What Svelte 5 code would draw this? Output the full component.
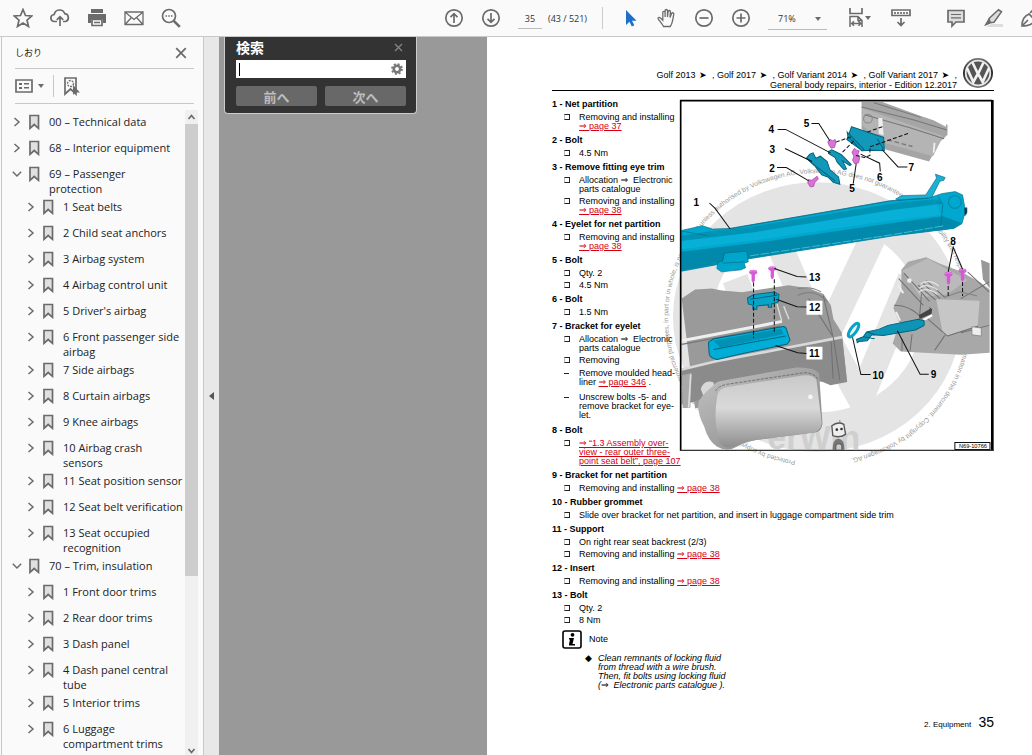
<script>
    /**
     * @typedef {Object} Bookmark
     * @property {string[]} lines - Title, one entry per line
     * @property {number} level - Depth in the outline
     * @property {boolean} [open] - Whether the children are shown
     */

    /** @type {Bookmark[]} */
    const bookmarks = [
        { lines: ["00 – Technical data"], level: 0 },
        { lines: ["68 – Interior equipment"], level: 0 },
        { lines: ["69 – Passenger", "protection"], level: 0, open: true },
        { lines: ["1 Seat belts"], level: 1 },
        { lines: ["2 Child seat anchors"], level: 1 },
        { lines: ["3 Airbag system"], level: 1 },
        { lines: ["4 Airbag control unit"], level: 1 },
        { lines: ["5 Driver's airbag"], level: 1 },
        { lines: ["6 Front passenger side", "airbag"], level: 1 },
        { lines: ["7 Side airbags"], level: 1 },
        { lines: ["8 Curtain airbags"], level: 1 },
        { lines: ["9 Knee airbags"], level: 1 },
        { lines: ["10 Airbag crash", "sensors"], level: 1 },
        { lines: ["11 Seat position sensor"], level: 1 },
        { lines: ["12 Seat belt verification"], level: 1 },
        { lines: ["13 Seat occupied", "recognition"], level: 1 },
        { lines: ["70 – Trim, insulation"], level: 0, open: true },
        { lines: ["1 Front door trims"], level: 1 },
        { lines: ["2 Rear door trims"], level: 1 },
        { lines: ["3 Dash panel"], level: 1 },
        { lines: ["4 Dash panel central", "tube"], level: 1 },
        { lines: ["5 Interior trims"], level: 1 },
        { lines: ["6 Luggage", "compartment trims"], level: 1 },
    ];

    // Each entry is a list of lines; a line is [plain text, link text, trailing text]
    const besideFigure = [
        { no: 1, name: "Net partition", items: [{ lines: [["Removing and installing"], ["", "⇒ page 37"]] }] },
        { no: 2, name: "Bolt", items: [{ lines: [["4.5 Nm"]] }] },
        {
            no: 3,
            name: "Remove fitting eye trim",
            items: [
                { lines: [["Allocation ⇒  Electronic"], ["parts catalogue"]] },
                { lines: [["Removing and installing"], ["", "⇒ page 38"]] },
            ],
        },
        { no: 4, name: "Eyelet for net partition", items: [{ lines: [["Removing and installing"], ["", "⇒ page 38"]] }] },
        { no: 5, name: "Bolt", items: [{ lines: [["Qty. 2"]] }, { lines: [["4.5 Nm"]] }] },
        { no: 6, name: "Bolt", items: [{ lines: [["1.5 Nm"]] }] },
        {
            no: 7,
            name: "Bracket for eyelet",
            items: [
                { lines: [["Allocation ⇒  Electronic"], ["parts catalogue"]] },
                { lines: [["Removing"]] },
                { step: true, lines: [["Remove moulded head-"], ["liner ", "⇒ page 346", " ."]] },
                { step: true, lines: [["Unscrew bolts -5- and"], ["remove bracket for eye-"], ["let."]] },
            ],
        },
        {
            no: 8,
            name: "Bolt",
            items: [
                {
                    lines: [
                        ["", "⇒ “1.3 Assembly over-"],
                        ["", "view - rear outer three-"],
                        ["", "point seat belt”, page 107"],
                    ],
                },
            ],
        },
    ];

    const belowFigure = [
        { no: 9, name: "Bracket for net partition", items: [{ lines: [["Removing and installing ", "⇒ page 38"]] }] },
        {
            no: 10,
            name: "Rubber grommet",
            items: [{ lines: [["Slide over bracket for net partition, and insert in luggage compartment side trim"]] }],
        },
        {
            no: 11,
            name: "Support",
            items: [
                { lines: [["On right rear seat backrest (2/3)"]] },
                { lines: [["Removing and installing ", "⇒ page 38"]] },
            ],
        },
        { no: 12, name: "Insert", items: [{ lines: [["Removing and installing ", "⇒ page 38"]] }] },
        { no: 13, name: "Bolt", items: [{ lines: [["Qty. 2"]] }, { lines: [["8 Nm"]] }] },
    ];

    // Callouts of the exploded view: label position and leader line
    const callouts = [
        { n: "1", x: 40, y: 324, line: "88,314 105,330 150,392" },
        { n: "2", x: 267, y: 221, line: "290,208 318,208 385,248" },
        { n: "3", x: 268, y: 164, line: "314,151 395,190" },
        { n: "4", x: 265, y: 106, line: "292,94 316,94 450,164" },
        { n: "5", x: 370, y: 87, line: "393,76 415,76 448,128" },
        { n: "5", x: 506, y: 282, line: "518,256 527,196" },
        { n: "6", x: 589, y: 247, line: "599,220 597,195 540,168" },
        { n: "7", x: 683, y: 219, line: "680,206 652,206 604,154" },
        { n: "8", x: 808, y: 440, line: "845,512 817,446 802,520" },
        { n: "13", x: 386, y: 547, line: "378,535 350,534 282,510" },
        { n: "12", x: 386, y: 637, line: "378,625 350,624 288,602" },
        { n: "11", x: 386, y: 775, line: "378,764 352,762 286,740" },
        { n: "10", x: 576, y: 840, line: "570,827 541,827 516,716" },
        { n: "9", x: 750, y: 838, line: "744,826 718,826 650,696" },
    ];

    let pageNumber = $state("35");
    let zoom = $state("71%");
    let query = $state("");
    let searchOpen = $state(true);
</script>

{#snippet partList(parts)}
    {#each parts as part}
        <section class="part">
            <h2>{part.no} - {part.name}</h2>
            <ul>
                {#each part.items as item}
                    <li class:step={item.step}>
                        <span class={item.step ? "dash" : "box"}></span>
                        <div>
                            {#each item.lines as [text, link, tail]}
                                <div class="line">{text}{#if link}<a href="#page">{link}</a>{/if}{tail ?? ""}</div>
                            {/each}
                        </div>
                    </li>
                {/each}
            </ul>
        </section>
    {/each}
{/snippet}

{#snippet bolt(x, y)}
    <g transform="translate({x} {y})" fill="#d65ad6">
        <ellipse cx="0" cy="0" rx="12" ry="7" />
        <path d="M-5 3h10v22l-4 6h-3l-3-6z" />
        <path d="M-9 -2q9 -6 18 0" fill="none" stroke="#f4a6f4" stroke-width="2" />
    </g>
{/snippet}

<div class="app">
    <header class="toolbar">
        <div class="group files">
            <button aria-label="Star">
                <svg width="20" height="20" viewBox="0 0 20 20"><path d="M10 1.500l2.500 6 6.300.5-4.800 4.200 1.500 6.300-5.500-3.400-5.500 3.400L6 12.200 1.200 8l6.300-.5z" /></svg>
            </button>
            <button aria-label="Upload">
                <svg width="20" height="20" viewBox="0 0 20 20"><path d="M7 13.500H4.500a3.500 3.500 0 0 1-.3-7 5.500 5.500 0 0 1 10.600-.8 4 4 0 0 1 .7 7.800H13M10 18V9M6.800 11.800L10 8.600l3.200 3.200" /></svg>
            </button>
            <button aria-label="Print">
                <svg width="20" height="20" viewBox="0 0 20 20"><path class="solid" d="M4 1h12v4H4zM1 6h18v9h-3v-4H4v4H1z" /><path d="M5 11.500h10v6H5zM7 14.500h6" /></svg>
            </button>
            <button aria-label="Mail">
                <svg width="20" height="20" viewBox="0 0 20 20"><path d="M1 4h18v12.500H1zM1.500 4.500l8.500 7 8.500-7M1.500 16l6-6.500M18.500 16l-6-6.500" stroke-width="1.300" /></svg>
            </button>
            <button aria-label="Search tools">
                <svg width="20" height="20" viewBox="0 0 20 20"><circle cx="8" cy="8" r="6.500" /><path d="M12.800 12.800l6 6" stroke-width="2.600" /><path d="M4.500 8h1.500M7.300 8h1.500M10 8h1.500" /></svg>
            </button>
        </div>
        <div class="group nav">
            <button aria-label="Previous page">
                <svg width="20" height="20" viewBox="0 0 20 20"><circle cx="10" cy="10" r="8.200" /><path d="M10 15V6M6.500 9.200L10 5.700l3.500 3.500" /></svg>
            </button>
            <button aria-label="Next page">
                <svg width="20" height="20" viewBox="0 0 20 20"><circle cx="10" cy="10" r="8.200" /><path d="M10 5v9M6.500 10.800l3.500 3.500 3.500-3.500" /></svg>
            </button>
        </div>
        <input class="page-no" aria-label="Page" bind:value={pageNumber} />
        <span class="page-total">(43 / 521)</span>
        <span class="divider"></span>
        <div class="group modes">
            <button aria-label="Select">
                <svg width="20" height="20" viewBox="0 0 20 20"><path d="M6 2v15l3.500-3.300 2.300 4.800 2.500-1.200-2.300-4.600h4.500z" fill="#1f6fc9" stroke="none" /></svg>
            </button>
            <button aria-label="Pan">
                <svg width="20" height="20" viewBox="0 0 20 20"><path d="M6.500 18.500C5 15.500 2.500 13 1.200 10.800c-.6-1.200 1-2 2-1l2.600 2.400V4.500c0-1.600 2.300-1.600 2.300 0V9 2.700c0-1.600 2.400-1.600 2.400 0V9l.6-5.500c.2-1.500 2.400-1.300 2.300.3L13 9.500l1.600-4c.6-1.400 2.600-.7 2.200.8-1 4-.8 8.500-3.600 12.200z" stroke-width="1.300" /></svg>
            </button>
            <button aria-label="Zoom out">
                <svg width="20" height="20" viewBox="0 0 20 20"><circle cx="10" cy="10" r="8.200" /><path d="M5.500 10h9" /></svg>
            </button>
            <button aria-label="Zoom in">
                <svg width="20" height="20" viewBox="0 0 20 20"><circle cx="10" cy="10" r="8.200" /><path d="M5.500 10h9M10 5.500v9" /></svg>
            </button>
        </div>
        <div class="zoom">
            <select aria-label="Zoom level" bind:value={zoom}>
                <option>71%</option>
                <option>100%</option>
            </select>
            <i class="caret"></i>
        </div>
        <button class="fit" aria-label="Page display">
            <svg width="18" height="20" viewBox="0 0 18 20"><path d="M3 0v5.500h12V0" /><path d="M3 19V8.500h8l4 4V19M11 8.500v4h4M5 15.500h8M7 13.200l-2.300 2.300L7 17.800M11.500 13.200l2.300 2.300-2.300 2.300" stroke-width="1.500" /></svg>
            <i class="caret"></i>
        </button>
        <button class="ruler" aria-label="Scroll mode">
            <svg width="20" height="20" viewBox="0 0 20 20"><path d="M1 2h18v5.500H1zM4 4v2M7 4v2M10 4v2M13 4v2M16 4v2M10 10v7M6.500 14l3.500 3.500 3.500-3.500" /></svg>
        </button>
        <div class="group notes">
            <button aria-label="Comment">
                <svg width="20" height="20" viewBox="0 0 20 20"><path d="M2 2.500h16v11.500h-8l-4 4v-4H2z" fill="#ddd" /><path d="M5 6.500h10M5 9.800h10" stroke-width="1.200" /></svg>
            </button>
            <button aria-label="Highlight">
                <svg width="20" height="20" viewBox="0 0 20 20"><path d="M8 16h12v3H3z" fill="#ddd" stroke="none" /><path d="M6 10.500L15.500 1.800l3 2-7.500 10.400-3.800.4zM6 11l-3 5.500 4.500-1.800" fill="#ddd" stroke-width="1.500" /><path class="solid" d="M5 12.500l2.500 2.200L1 18z" /></svg>
            </button>
            <button aria-label="Sign">
                <svg width="20" height="20" viewBox="0 0 20 20"><path d="M2 18C2 13 4 8 9 6l6 6c-2 4-7 6-13 6zM2 18l6-6M10 5l3-3 6 6" /></svg>
            </button>
        </div>
    </header>

    <div class="body">
        <aside class="sidebar">
            <div class="side-head">
                <h1>しおり</h1>
                <button aria-label="Close bookmarks">
                    <svg width="12" height="12" viewBox="0 0 12 12"><path d="M1.200 1.200l9.600 9.600M10.800 1.200L1.200 10.800" /></svg>
                </button>
            </div>
            <div class="side-tools">
                <button class="options" aria-label="Options">
                    <svg width="18" height="14" viewBox="0 0 18 14"><path d="M1 1h16v12H1z" /><path class="solid" d="M4 4h3v2H4zM4 8h3v2H4zM9 4h5v1.500H9zM9 8h5v1.500H9z" /></svg>
                    <i class="caret"></i>
                </button>
                <button aria-label="Find current bookmark">
                    <svg width="18" height="19" viewBox="0 0 18 19"><path d="M2 1h11v16l-5.500-5L2 17z" /><circle cx="7.500" cy="6.500" r="3" stroke-width="1.300" stroke-dasharray="2 1" /><path class="solid" d="M10 8v10l2.300-2.500H17z" /></svg>
                </button>
            </div>
            <div class="outline">
                <ul class="bookmarks">
                    {#each bookmarks as bookmark}
                        <li class:child={bookmark.level > 0}>
                            <button class="toggle" aria-label="Toggle {bookmark.lines[0]}">
                                {#if bookmark.open}
                                    <svg width="10" height="8" viewBox="0 0 10 8"><path d="M.8 1.800L5 6l4.200-4.200" stroke-width="1.500" /></svg>
                                {:else}
                                    <svg width="10" height="10" viewBox="0 0 10 10"><path d="M2.500 1L7 5 2.500 9" stroke-width="1.500" /></svg>
                                {/if}
                            </button>
                            <svg class="mark" width="12" height="16" viewBox="0 0 12 16"><path d="M2 1.500h8.500v12.800L6.200 10.500 2 14.300z" fill="#e0e0e0" /></svg>
                            <a href="#page">{#each bookmark.lines as line}<span>{line}</span>{/each}</a>
                        </li>
                    {/each}
                </ul>
                <div class="scrollbar">
                    <svg width="13" height="14" viewBox="0 0 13 14"><path d="M3.500 9l3-3.500 3 3.500" /></svg>
                    <div class="thumb"></div>
                    <svg width="13" height="14" viewBox="0 0 13 14"><path d="M3.500 8l3 3.500 3-3.500" /></svg>
                </div>
            </div>
        </aside>
        <button class="splitter" aria-label="Collapse panel"></button>

        <main class="viewer">
            {#if searchOpen}
                <form class="search">
                    <div class="search-head">
                        <label for="query">検索</label>
                        <button type="button" aria-label="Close search" onclick={() => (searchOpen = false)}>
                            <svg width="9" height="9" viewBox="0 0 9 9"><path d="M1 1l7 7M8 1L1 8" stroke="#858585" stroke-width="1.300" /></svg>
                        </button>
                    </div>
                    <div class="field">
                        <span class="cursor"></span>
                        <input id="query" bind:value={query} />
                        <svg width="12" height="12" viewBox="0 0 12 12"><circle cx="6" cy="6" r="3.200" stroke="#777" stroke-width="2.600" /><circle cx="6" cy="6" r="5" stroke="#777" stroke-width="1.800" stroke-dasharray="2 1.930" /></svg>
                    </div>
                    <div class="search-buttons">
                        <button type="button">前へ</button>
                        <button type="button">次へ</button>
                    </div>
                </form>
            {/if}

            <article class="page" id="page">
                <header class="page-head">
                    <div class="titles">
                        <div>Golf 2013 <i>➤</i> , Golf 2017 <i>➤</i> , Golf Variant 2014 <i>➤</i> , Golf Variant 2017 <i>➤</i> ,</div>
                        <div>General body repairs, interior - Edition 12.2017</div>
                    </div>
                    <svg class="logo" width="32" height="32" viewBox="0 0 32 32">
                        <defs>
                            <linearGradient id="chrome" x1="0" y1="0" x2="0" y2="1">
                                <stop offset="0" stop-color="#777" />
                                <stop offset=".5" stop-color="#222" />
                                <stop offset="1" stop-color="#777" />
                            </linearGradient>
                        </defs>
                        <circle cx="16" cy="16" r="15" fill="url(#chrome)" />
                        <circle cx="16" cy="16" r="12.300" fill="#555" stroke="#e8e8e8" stroke-width="1.800" />
                        <path d="M10.500 5.500L16 17l5.500-11.500M5 11l6.300 14L16 16.500 20.700 25 27 11" fill="none" stroke="#f2f2f2" stroke-width="2.600" />
                    </svg>
                </header>

                <div class="top">
                    <div class="beside">{@render partList(besideFigure)}</div>
                    <svg class="figure" viewBox="0 6 939 1056" role="img" aria-label="Exploded view of net partition">
                        <defs>
                            <path id="seal" d="M345 1084A448 432 0 1 1 480 1084" />
                            <linearGradient id="cushion" x1="0" y1="0" x2="0" y2="1">
                                <stop offset="0" stop-color="#c9c9c9" />
                                <stop offset=".45" stop-color="#d9d9d9" />
                                <stop offset="1" stop-color="#8d8d8d" />
                            </linearGradient>
                            <linearGradient id="cushionSide" x1="0" y1="0" x2="1" y2="1">
                                <stop offset="0" stop-color="#c4c4c4" />
                                <stop offset="1" stop-color="#808080" />
                            </linearGradient>
                        </defs>

                        <!-- watermark -->
                        <ellipse cx="410" cy="655" rx="372" ry="344" fill="none" stroke="#e4e4e4" stroke-width="118" />
                        <path d="M280 400L425 740 590 390M165 540L300 900 425 690 540 900 690 540" fill="none" stroke="#e4e4e4" stroke-width="78" />
                        <text class="erwin" x="262" y="1050">erWin</text>
                        <text class="seal"><textPath href="#seal">Protected by copyright. Copying for private or commercial purposes, in part or in whole, is not permitted unless authorised by Volkswagen AG. Volkswagen AG does not guarantee or accept any liability with respect to the correctness of information in this document. Copyright by Volkswagen AG.</textPath></text>
                        <g>
                            <path d="M456 1052q0-32 18-34 18 2 18 34z" fill="#777" />
                            <path d="M454 980q18-14 36-4l5 30q-18 12-38 4z" fill="#eee" stroke="#555" stroke-width="4" />
                            <path d="M466 1052v-14q8-8 18 0v14" fill="#ccc" stroke="#555" stroke-width="3" />
                            <circle cx="469" cy="992" r="4" fill="#333" /><circle cx="483" cy="990" r="4" fill="#333" />
                            <path d="M478 972v-8" stroke="#777" stroke-width="3" />
                        </g>

                        <!-- roof frame -->
                        <path d="M543 12h62l115 42 80 26v30l-24 22-31 58-130-36-72-62z" fill="#a5a5a5" />
                        <path d="M545 30l120 42 122 42-30 60-140-38-72-54z" fill="#b4b4b4" />
                        <path d="M614 12l98 0 56 32 28 30-1 12-38-20-65-26z" fill="#fff" />
                        <path d="M543 27L700 66 798 96M552 50L690 90 790 122M580 14L720 58" fill="none" stroke="#777" stroke-width="3" />
                        <path d="M593 60h12l4 52-15-6zM758 134h6l-3 30h-5z" fill="#eee" />
                        <circle cx="562" cy="62" r="13" fill="none" stroke="#888" stroke-width="3" />
                        <path d="M620 125l75 20" stroke="#777" stroke-width="4" stroke-dasharray="14 8" />

                        <!-- seat backrest -->
                        <path d="M5 600l40-27 50-3 30 6 60 5 60-9 80-12 62 10 42 16 22 34 8 42 25 40 14 134-50 16-28-4-150 40-225 40z" fill="#9a9a9a" />
                        <path d="M5 726l200-38 100-20" fill="none" stroke="#efefef" stroke-width="9" />
                        <path d="M5 737l295-55" stroke="#777" stroke-width="4" />
                        <path d="M5 814l100-25 220-40 160-30 15 130-50 10-70-30-160 20-110 30-70 30-35 8z" fill="#8b8b8b" />
                        <path d="M5 812l100-24 230-44 150-29" fill="none" stroke="#d9d9d9" stroke-width="8" />
                        <path d="M5 830l30-8-4 105H8z" fill="#a9a9a9" />
                        <path d="M32 826l-6 100" stroke="#ddd" stroke-width="5" />
                        <path d="M290 616l14 50M310 622l16 40" stroke="#ddd" stroke-width="4" />
                        <path d="M385 600l70 110M428 590l32 134 18 120M452 730l6 110" fill="none" stroke="#707070" stroke-width="3" />
                        <path d="M352 590q50-24 90 20M352 570q40-8 70 10" fill="none" stroke="#7c7c7c" stroke-width="3" />

                        <!-- head restraint -->
                        <path d="M62 870q10-30 38-20l8 50-36-4z" fill="#d8d8d8" />
                        <path d="M98 862q6-12 24-16l226-40q54-2 68 18l10 150q-2 24-24 26l-150 20q-50 4-84 24-28 16-58-2-26-16-38-60-22-40-16-74 14-26 42-46z" fill="url(#cushionSide)" />
                        <path d="M112 888q4-20 30-24l224-34q34-4 42 14l16 128q-2 24-24 28l-150 20q-60 6-92 24-24 6-40-14-20-70-6-142z" fill="url(#cushion)" />
                        <path d="M106 876q10-16 36-20l226-34q30-2 44 18" fill="none" stroke="#555" stroke-width="2" stroke-dasharray="9 4" />
                        <circle cx="390" cy="894" r="7" fill="#f5f5f5" />

                        <!-- luggage compartment side trim -->
                        <path d="M662 514l20-24 54-14 42 20 60 22 60 34 28 20v190l-86 6-180-10-24-24 20-62-18-44 24-52z" fill="#a8a8a8" />
                        <path d="M665 516l75-36 80 44 40 20-62 44-78 8z" fill="#bababa" />
                        <path d="M900 484l26 10v76l-20-28z" fill="#999" />
                        <path d="M766 602l130 4-6 76-90 28-14-6z" fill="#c6c6c6" />
                        <path d="M640 620q50 0 84 40M654 540l74 80M670 524l76 84M712 560l52 44M724 552l54 48M736 546l56 50M664 720v36M694 706l-6 50M792 710l-30 44M840 702l84-22M800 712l92-30M860 520l64 60M840 600l84-50M722 586l-8 100M740 660l60 52" fill="none" stroke="#707070" stroke-width="3" />
                        <path d="M720 556q24-16 54 6M716 568q24-16 54 6M714 580q24-16 54 6" fill="none" stroke="#e6e6e6" stroke-width="4" />
                        <path d="M790 596l46-16 52 12" fill="none" stroke="#888" stroke-width="4" />
                        <path d="M652 560l16 24M646 640l12 26" stroke="#eee" stroke-width="6" />
                        <path d="M714 650l34-20-4-6 10 8-2 14-34 14z" fill="#444" />
                        <path d="M728 664l26-14" stroke="#fff" stroke-width="7" />
                        <path d="M873 684l28 4v24l-28-4z" fill="#eee" stroke="#777" stroke-width="2" />
                        <circle cx="686" cy="546" r="7" fill="#eee" />

                        <!-- net partition -->
                        <g stroke="#006f8c" stroke-width="2">
                            <path d="M645 302l18-10 72-2 32-50-3-12 29 10-4 8-12 3-26 52-60 20z" fill="#1cb0d4" />
                            <path d="M5 396l62-14 30 10 52-2 480-82 112-8 42-14 40-6 22 10 6 34 6 14-6 10-8 28-24 14-180 22-440 70-194 36z" fill="#00a8cf" />
                            <path d="M5 460l215-26 400-58 166-22 56 20-24 16-180 22-432 68-201 36z" fill="#0089aa" stroke="none" />
                            <path d="M5 412l90-14 100-10 450-74 125-12 16 14-118 18-448 68-215 26z" fill="#0093b4" stroke="none" />
                            <path d="M5 428l215-26 420-68 130-16 10 32-160 18-400 58-215 26z" fill="#08b0d8" stroke="none" />
                            <path d="M150 391l480-84 112-8M5 398l78 14" fill="none" />
                            <path d="M210 472l430-64 150-26" fill="none" stroke="#5ed0e8" stroke-dasharray="26 5" />
                            <path d="M772 296l14 22-6 64" fill="none" />
                            <circle cx="822" cy="311" r="19" fill="#00a8cf" />
                            <path d="M850 330l8-2v16l-6 8z" fill="#223" />
                            <path d="M132 464l68-6 4 32-12 4 4 14-14 6-58 6-14-10 4-18 14-6z" fill="#00a5cb" />
                            <path d="M128 494l66-4M132 464l-6 28" fill="none" />
                        </g>

                        <!-- small mounting parts -->
                        <g fill="#1298b8" stroke="#006580" stroke-width="3">
                            <path d="M513 86l96 32 2 40-34-2-32 2-46-34z" />
                            <path d="M500 102l50 52-6 4-42-44zM590 122l18 30" />
                            <path d="M444 160l10-5 28 14 30 30-4 3-22-14 12 24-8 2-20-22-6-14-20-12z" />
                            <path d="M388 168l10-4 8 16 14-6 20 16 8 24 26 22 4 22-20-6-16-16-18-6-22-28-24-22z" />
                            <path d="M378 180l26 22 60 46" fill="none" />
                            <path d="M202 598l18-10 62-8 14 8-2 22-20 6v10h-10v-8l-34 4v10h-12v-12l-14-4z" fill="#08a4c8" />
                            <path d="M210 602l80-12" fill="none" />
                            <path d="M85 730l16-10 204-36q12-2 14 10l10 30-8 12-150 32-60 14q-22-4-24-18z" fill="#00add6" />
                            <path d="M100 726l202-36 8 16-190 40z" fill="#0092b5" stroke="none" />
                            <path d="M100 752l216-40" fill="none" />
                            <path d="M530 732l-2-10 20-8 10-14 36-8 28-12 90-18 18 4v14l-26 14-96 16-34-2-14 18-24 2z" fill="#0e94b4" />
                            <path d="M548 714l34 6M560 700l24 8" fill="none" />
                        </g>
                        <ellipse cx="519" cy="694" rx="9" ry="24" transform="rotate(35 519 694)" fill="#e8f7fa" stroke="#08a4c8" stroke-width="9" />

                        <!-- bolts -->
                        <path d="M442 130l8-6 6 4 8-4 2 10-4 14-10 2-6-8zM514 162l8-12 6 6 8 2-4 10 6 8-4 18-12 2-6-10 4-12zM384 244l10 2 16-12 4 8-12 12-2 10-10 2-8-12z" fill="#d873d8" stroke="#a038a0" stroke-width="2" />
                        {@render bolt(219, 521)}
                        {@render bolt(276, 510)}
                        {@render bolt(803, 527)}
                        {@render bolt(845, 517)}

                        <g fill="none" stroke="#111" stroke-width="3">
                            <path d="M220 552v166M282 542v160M802 562v36M845 550v42" stroke-dasharray="12 6" />
                            <path d="M466 132l46-16M486 162l34-34M560 102l50-18M682 106l-114 40v26l-16 6-26-6" stroke-dasharray="12 6" />
                        </g>
                        <path d="M378 606h48v42h-48zM378 744h48v38h-48z" fill="#fff" />
                        {#each callouts as c}
                            <polyline points={c.line} fill="none" stroke="#111" stroke-width="3" />
                            <text class="callout" x={c.x} y={c.y}>{c.n}</text>
                        {/each}
                        <path d="M822 1030h105v21h-105z" fill="#fff" stroke="#111" stroke-width="3" />
                        <text class="plate" x="834" y="1048">N69-10766</text>

                        <path d="M2 1056V8h932" fill="none" stroke="#000" stroke-width="5" />
                        <path d="M934 6v1050" stroke="#000" stroke-width="8" />
                        <path d="M0 1054h938" stroke="#333" stroke-width="4" />
                    </svg>
                </div>

                {@render partList(belowFigure)}

                <div class="note">
                    <svg width="20" height="19" viewBox="0 0 20 19"><rect x="1" y="1" width="18" height="17" rx="2" fill="#fff" stroke="#000" stroke-width="1.600" /><circle cx="10.500" cy="4.800" r="1.900" fill="#000" stroke="none" /><path d="M7 8h5l-1.500 6H13v1.500H7V14l1-4.500H7z" fill="#000" stroke="none" /></svg>
                    <span>Note</span>
                </div>
                <div class="remark">
                    <i>◆</i>
                    <p>Clean remnants of locking fluid<br />from thread with a wire brush.<br />Then, fit bolts using locking fluid<br />(⇒&nbsp; Electronic parts catalogue ).</p>
                </div>

                <footer>2. Equipment <b>35</b></footer>
            </article>
        </main>
    </div>
</div>

<style>
    :global(body) {
        margin: 0;
    }

    .app {
        display: flex;
        flex-direction: column;
        height: 100vh;
        overflow: hidden;
        background: #fafafa;
        color: #222;
        font-family: "Open Sans", "Noto Sans CJK JP", sans-serif;
        font-size: 11px;
    }

    button {
        display: flex;
        align-items: center;
        justify-content: center;
        padding: 0;
        border: none;
        background: none;
        font: inherit;
        color: inherit;
    }

    ul {
        margin: 0;
        padding: 0;
        list-style: none;
    }

    svg {
        flex: none;
        fill: none;
        stroke: #6b6b6b;
        stroke-width: 1.7;
    }

    .solid {
        fill: #6b6b6b;
        stroke: none;
    }

    .caret {
        border: 3px solid transparent;
        border-top: 4px solid #6b6b6b;
        border-bottom: none;
    }

    /* toolbar */
    .toolbar {
        display: flex;
        flex: none;
        align-items: center;
        height: 36px;
        padding-left: 4px;
        overflow: hidden;
        border-bottom: 1px solid #c8c8c8;
    }

    .group {
        display: flex;
        flex: none;
    }

    .group button {
        width: 37px;
        height: 36px;
    }

    .nav {
        margin-left: 246px;
    }

    .page-no {
        flex: none;
        box-sizing: border-box;
        width: 24px;
        height: 20px;
        margin: 2px 6px 0 9px;
        padding: 0;
        border: none;
        border-bottom: 1px solid #bbb;
        background: none;
        color: #333;
        font: 9px "Open Sans", sans-serif;
        text-align: center;
    }

    .page-total {
        flex: none;
        width: 54px;
        color: #333;
        font-size: 9px;
        white-space: nowrap;
    }

    .divider {
        flex: none;
        width: 1px;
        height: 22px;
        margin-right: 8px;
        background: #ccc;
    }

    .zoom {
        display: flex;
        flex: none;
        align-items: center;
        width: 59px;
        height: 20px;
        margin: 2px 0 0 9px;
        border-bottom: 1px solid #bbb;
    }

    .zoom select {
        width: 47px;
        padding: 0 0 0 10px;
        border: none;
        appearance: none;
        background: none;
        color: #333;
        font: 9px "Open Sans", sans-serif;
    }

    .fit {
        flex: none;
        margin-left: 20px;
    }

    .ruler {
        flex: none;
        margin-left: 20px;
    }

    .notes {
        margin-left: 26px;
    }

    /* bookmarks */
    .body {
        display: flex;
        flex: 1;
        min-height: 0;
    }

    .sidebar {
        display: flex;
        flex: none;
        flex-direction: column;
        box-sizing: border-box;
        width: 203px;
        margin-left: 1px;
        border: solid #c8c8c8;
        border-width: 0 1px;
    }

    .side-head,
    .side-tools {
        display: flex;
        flex: none;
        align-items: center;
        height: 31px;
        margin: 0 9px 0 13px;
        border-bottom: 1px solid #c8c8c8;
    }

    .side-head {
        justify-content: space-between;
        padding-right: 7px;
    }

    .side-head h1 {
        margin: 0;
        font-size: 9px;
        font-weight: 400;
    }

    .side-tools {
        gap: 9px;
        height: 34px;
    }

    .options {
        gap: 5px;
        height: 22px;
        padding-right: 9px;
        border-right: 1px solid #c8c8c8;
    }

    .outline {
        display: flex;
        flex: 1;
        min-height: 0;
        margin-top: 6px;
    }

    .bookmarks {
        flex: 1;
        min-width: 0;
        overflow: hidden;
        padding-top: 4px;
    }

    .bookmarks li {
        display: flex;
        align-items: flex-start;
        box-sizing: border-box;
        min-height: 26px;
        padding: 0 0 3px 10px;
    }

    .bookmarks li.child {
        padding-left: 24px;
    }

    .toggle {
        flex: none;
        width: 10px;
        height: 15px;
    }

    .mark {
        margin: 0 9px 0 6px;
    }

    .bookmarks a {
        color: #222;
        line-height: 15px;
        text-decoration: none;
        white-space: nowrap;
    }

    .bookmarks span {
        display: block;
    }

    .scrollbar {
        display: flex;
        flex: none;
        flex-direction: column;
        justify-content: space-between;
        width: 13px;
        margin-right: 5px;
        background: #f0f0f0;
    }

    .thumb {
        height: 70%;
        margin-bottom: auto;
        background: #cdcdcd;
    }

    .splitter {
        flex: none;
        width: 15px;
        background: #e8e8e8;
    }

    .splitter::before {
        content: "";
        border: 4px solid transparent;
        border-right: 5px solid #555;
        border-left: none;
    }

    /* document */
    .viewer {
        position: relative;
        display: flex;
        flex: 1;
        min-width: 0;
        padding-left: 268px;
        background: #999;
    }

    .search {
        position: absolute;
        top: 0;
        left: 5px;
        box-sizing: border-box;
        width: 193px;
        padding: 0 10px 7px 11px;
        border: 1px solid #ccc;
        border-top: none;
        border-radius: 0 0 4px 4px;
        background: #333;
        font-family: "Noto Sans CJK JP", sans-serif;
    }

    .search-head {
        display: flex;
        align-items: center;
        justify-content: space-between;
        height: 20px;
        margin-bottom: 3px;
        padding-right: 3px;
        color: #fff;
        font-size: 14px;
        font-weight: 700;
    }

    .field {
        display: flex;
        align-items: center;
        height: 18px;
        padding: 0 3px;
        background: #fff;
    }

    .cursor {
        width: 1px;
        height: 13px;
        background: #000;
    }

    .field input {
        flex: 1;
        min-width: 0;
        padding: 0 2px;
        border: none;
        outline: none;
        background: none;
    }

    .search-buttons {
        display: flex;
        gap: 8px;
        margin-top: 8px;
    }

    .search-buttons button {
        flex: 1;
        height: 20px;
        border-radius: 2px;
        background: #686868;
        color: #bdbdbd;
        font-size: 13px;
        font-weight: 700;
    }

    .page {
        display: flex;
        flex: 1;
        flex-direction: column;
        min-width: 0;
        padding: 20px 38px 22px 65px;
        background: #fff;
        color: #000;
        font-family: "Liberation Sans", "DejaVu Sans", sans-serif;
        font-size: 9px;
        line-height: 9px;
    }

    .page-head {
        display: flex;
        align-items: flex-end;
        justify-content: flex-end;
        gap: 5px;
        height: 33px;
        border-bottom: 1px solid #000;
    }

    .titles {
        line-height: 10px;
        text-align: right;
        white-space: nowrap;
    }

    .titles i {
        margin: 0 3px 0 1px;
        font-size: 9px;
    }

    .logo {
        margin-bottom: 1px;
        stroke: none;
    }

    .top {
        display: flex;
        align-items: flex-start;
        margin-top: 9px;
    }

    .beside {
        position: relative;
        z-index: 1;
        flex: none;
        width: 128px;
    }

    .figure {
        flex: 1;
        min-width: 0;
        overflow: visible;
        stroke: none;
    }

    .part {
        margin-bottom: 5px;
    }

    .part h2 {
        margin: 0 0 4px;
        font-size: 9px;
        font-weight: 700;
    }

    .part li {
        display: flex;
        margin: 0 0 3px 12px;
    }

    .part li:last-child {
        margin-bottom: 0;
    }

    .part li.step {
        margin: 4px 0 6px 12px;
    }

    .line {
        white-space: pre;
    }

    .box {
        flex: none;
        box-sizing: border-box;
        width: 6px;
        height: 6px;
        margin: 1px 9px 0 0;
        border: 1px solid #222;
        border-left-color: #bbb;
    }

    .dash {
        flex: none;
        width: 5px;
        height: 1px;
        margin: 4px 10px 0 0;
        background: #222;
    }

    .part a {
        color: #d4000f;
    }

    .callout {
        fill: #000;
        font-size: 30px;
        font-weight: 700;
    }

    .seal {
        fill: #999;
        font-size: 20px;
    }

    .erwin {
        fill: #cfcfcf;
        font-size: 100px;
        font-weight: 700;
    }

    .plate {
        fill: #000;
        font-size: 17px;
    }

    .note {
        display: flex;
        align-items: center;
        gap: 7px;
        margin-left: 10px;
    }

    .remark {
        display: flex;
        gap: 6px;
        margin: 5px 0 0 33px;
        font-style: italic;
    }

    .remark i {
        width: 7px;
        font-style: normal;
    }

    .remark p {
        margin: 0;
    }

    footer {
        margin-top: auto;
        text-align: right;
        line-height: 16px;
        font-size: 8px;
    }

    footer b {
        margin-left: 5px;
        font-size: 14px;
        font-weight: 400;
    }
</style>
